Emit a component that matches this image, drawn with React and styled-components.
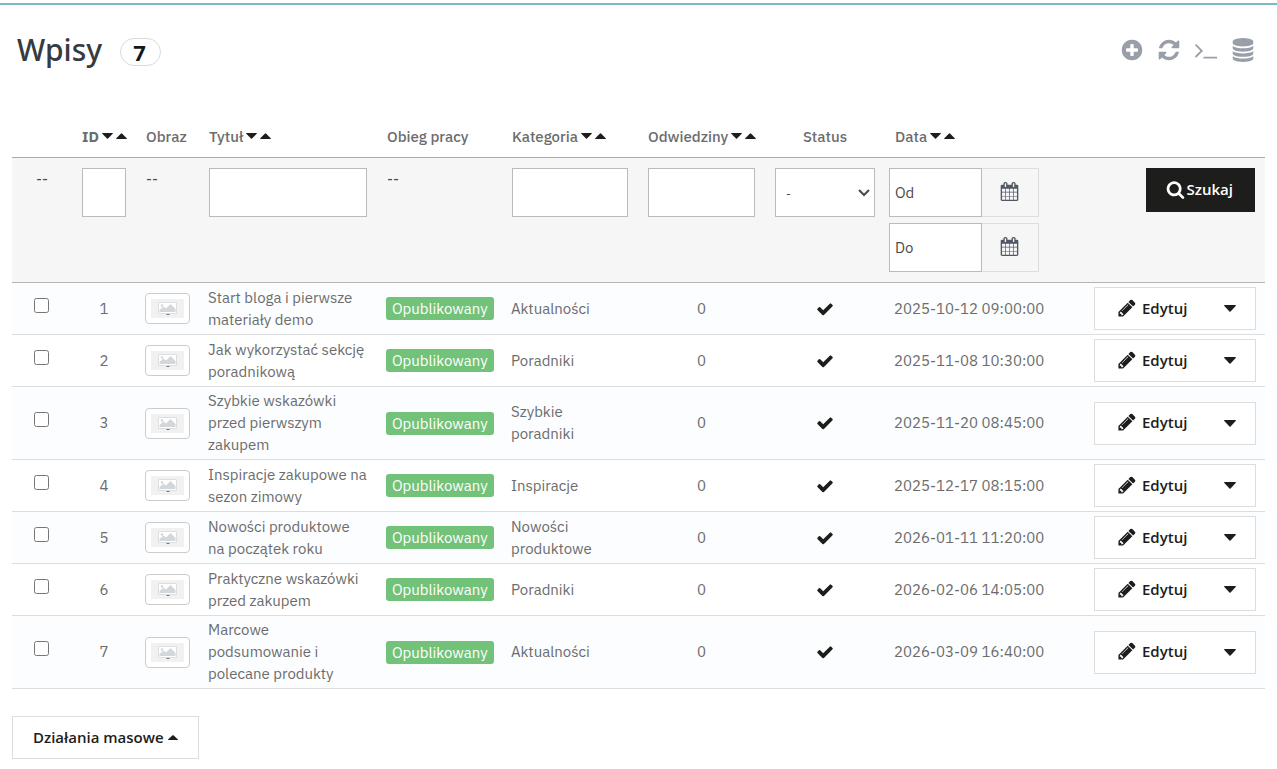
import React from 'react'
import styled, { createGlobalStyle } from 'styled-components';

const GlobalStyle = createGlobalStyle`
  * {
    box-sizing: border-box;
  }
  body {
    margin: 0;
    background-color: white;
    color: #6c6c6c;
    font-family: "IBM Plex Sans", Roboto, sans-serif;
    font-size: 15px;
    line-height: 22px;
  }
  button, input, select {
    font: inherit;
    border-radius: 0;
    margin: 0;
  }
`;

const Container = styled.main`
  margin-top: 3px;
  border-top: 2px solid #7db8c6;
`;
const Top = styled.header`
  display: flex;
  align-items: center;
  justify-content: space-between;
  padding: 24px 22px 0 17px;
  height: 66px;
`;
const Heading = styled.div`
  display: flex;
  align-items: center;
  gap: 18px;
`;
const Title = styled.h1`
  margin: 0;
  font-family: "Noto Sans", "Open Sans", sans-serif;
  font-weight: 500;
  font-size: 30px;
  line-height: 42px;
  color: #363a41;
`;
const Count = styled.span`
  width: 41px;
  height: 28px;
  margin-top: 3px;
  padding-right: 2px;
  border: 1px solid #dadada;
  border-radius: 14px;
  font-family: "Open Sans", sans-serif;
  font-weight: 700;
  font-size: 22px;
  line-height: 26px;
  text-align: center;
  color: #121821;
`;
const Tools = styled.nav`
  display: flex;
  gap: 13px;
`;
const Tool = styled.button`
  display: flex;
  padding: 0;
  border: none;
  background: none;
  color: #999fa9;
  cursor: pointer;
`;
const Wrapper = styled.form`
  padding: 45px 12px 10px;
`;
const Table = styled.table`
  width: 100%;
  table-layout: fixed;
  border-spacing: 0;
`;
const Col = styled.col`
  width: ${(props) => props.$w}px;
`;
const Th = styled.th`
  height: 42px;
  padding: 1px 0 0 ${(props) => (props.$center ? 0 : 10)}px;
  border-bottom: 1px solid #7fbacc;
  font-weight: 500;
  white-space: nowrap;
  text-align: ${(props) => (props.$center ? "center" : "left")};
`;
const HeadLabel = styled.span`
  display: inline-flex;
  align-items: center;
  gap: 3px;
  font-weight: ${(props) => (props.$strong ? 700 : 500)};
`;
const SortButton = styled.button`
  display: inline-flex;
  padding: 0 0 2px;
  border: none;
  background: none;
  color: #1d1d1b;
  cursor: pointer;
`;
const FilterCell = styled.td`
  height: 125px;
  padding: 10px 10px 10px ${(props) => (props.$date ? 4 : 10)}px;
  background-color: #f6f6f6;
  border-bottom: 1px solid #b5b5b5;
  vertical-align: top;
  color: #4a4a4a;
  text-align: ${(props) => props.$align || "left"};
`;
const Field = styled.input`
  display: block;
  width: 100%;
  height: 49px;
  padding: 0 5px;
  border: 1px solid #bbb;
  background-color: white;
  color: #4a4a4a;
  &::placeholder {
    color: #4a4a4a;
    opacity: 1;
  }
`;
const SelectBox = styled.div`
  display: grid;
  align-items: center;
  > * {
    grid-area: 1 / 1;
  }
  svg {
    justify-self: end;
    margin-right: 5px;
    pointer-events: none;
  }
`;
const Select = styled.select`
  width: 100%;
  height: 49px;
  padding: 2px 10px 0;
  border: 1px solid #bbb;
  background-color: white;
  color: #4a4a4a;
  font-size: 12px;
  appearance: none;
`;
const Dates = styled.div`
  display: flex;
  flex-direction: column;
  gap: 6px;
`;
const DateRow = styled.div`
  display: flex;
  width: 150px;
  ${Field} {
    width: 93px;
  }
`;
const Addon = styled.button`
  flex: 1;
  display: flex;
  align-items: center;
  justify-content: center;
  height: 49px;
  padding: 0 1px 2px 0;
  border: 1px solid #ddd;
  border-left: none;
  background-color: #f6f6f6;
  color: #515764;
`;
const SearchButton = styled.button`
  display: inline-flex;
  align-items: center;
  gap: 2px;
  height: 44px;
  padding: 0 22px 2px 20px;
  border: none;
  background-color: #1d1d1b;
  color: white;
  font-family: "Open Sans", sans-serif;
  font-weight: 600;
  cursor: pointer;
`;
const Row = styled.tr`
  background-color: white;
  &:nth-child(odd) {
    background-color: #fbfdff;
  }
`;
const Td = styled.td`
  padding: 3px 9px;
  border-bottom: 1px solid #ddd;
  text-align: ${(props) => (props.$center ? "center" : "left")};
`;
const Status = styled.span`
  display: flex;
  justify-content: center;
  color: #1d1d1b;
`;
const Check = styled.input`
  display: block;
  width: 15px;
  height: 15px;
  margin: 0 0 7px 13px;
`;
const Thumb = styled.div`
  display: flex;
  width: 45px;
  padding: 5px;
  border: 1px solid #ccc;
  border-radius: 4px;
  background-color: white;
`;
const Label = styled.span`
  display: block;
  width: fit-content;
  padding: 0 6px;
  border-radius: 3px;
  background-color: #72c279;
  color: white;
  line-height: 23px;
`;
const Group = styled.div`
  display: flex;
  height: 43px;
  margin: 1px 0 1px 1px;
  border: 1px solid #ddd;
  background-color: white;
`;
const Edit = styled.a`
  flex: 1;
  display: flex;
  align-items: center;
  gap: 5px;
  padding: 0 0 2px 22px;
  color: #1d1d1b;
  font-family: "Open Sans", sans-serif;
  font-weight: 600;
  text-decoration: none;
`;
const Toggle = styled.button`
  display: flex;
  align-items: center;
  padding: 0 19px;
  border: none;
  background: none;
  color: #1d1d1b;
  cursor: pointer;
`;
const Bulk = styled.button`
  display: flex;
  align-items: center;
  gap: 4px;
  height: 43px;
  margin-top: 27px;
  padding: 0 20px 1px;
  border: 1px solid #ddd;
  background-color: white;
  color: #1d1d1b;
  font-family: "Open Sans", sans-serif;
  font-weight: 600;
  cursor: pointer;
`;

const icons = {
  plus: "M1344 960v-128q0-26-19-45t-45-19h-256v-256q0-26-19-45t-45-19h-128q-26 0-45 19t-19 45v256h-256q-26 0-45 19t-19 45v128q0 26 19 45t45 19h256v256q0 26 19 45t45 19h128q26 0 45-19t19-45v-256h256q26 0 45-19t19-45zm320-64q0 209-103 385.5t-279.5 279.5-385.5 103-385.5-103-279.5-279.5-103-385.5 103-385.5 279.5-279.5 385.5-103 385.5 103 279.5 279.5 103 385.5z",
  refresh: "M1639 1056q0 5-1 7-64 268-268 434.5t-478 166.5q-146 0-282.5-55t-243.5-157l-129 129q-19 19-45 19t-45-19-19-45v-448q0-26 19-45t45-19h448q26 0 45 19t19 45-19 45l-137 137q71 66 161 102t187 36q134 0 250-65t186-179q11-17 53-117 8-23 30-23h192q13 0 22.5 9.5t9.5 22.5zm25-800v448q0 26-19 45t-45 19h-448q-26 0-45-19t-19-45 19-45l138-138q-148-137-349-137-134 0-250 65t-186 179q-11 17-53 117-8 23-30 23h-199q-13 0-22.5-9.5t-9.5-22.5v-7q65-268 270-434.5t480-166.5q146 0 284 55.5t245 156.5l130-129q19-19 45-19t45 19 19 45z",
  terminal: "M649 983l-466 466q-10 10-23 10t-23-10l-50-50q-10-10-10-23t10-23l393-393-393-393q-10-10-10-23t10-23l50-50q10-10 23-10t23 10l466 466q10 10 10 23t-10 23zm1079 457v64q0 14-9 23t-23 9h-960q-14 0-23-9t-9-23v-64q0-14 9-23t23-9h960q14 0 23 9t9 23z",
  database: "M896 768q237 0 443-43t325-127v170q0 69-103 128t-280 93.5-385 34.5-385-34.5-280-93.5-103-128v-170q119 84 325 127t443 43zm0 768q237 0 443-43t325-127v170q0 69-103 128t-280 93.5-385 34.5-385-34.5-280-93.5-103-128v-170q119 84 325 127t443 43zm0-384q237 0 443-43t325-127v170q0 69-103 128t-280 93.5-385 34.5-385-34.5-280-93.5-103-128v-170q119 84 325 127t443 43zm0-1152q208 0 385 34.5t280 93.5 103 128v128q0 69-103 128t-280 93.5-385 34.5-385-34.5-280-93.5-103-128v-128q0-69 103-128t280-93.5 385-34.5z",
  search: "M1216 832q0-185-131.5-316.5t-316.5-131.5-316.5 131.5-131.5 316.5 131.5 316.5 316.5 131.5 316.5-131.5 131.5-316.5zm512 832q0 52-38 90t-90 38q-54 0-90-38l-343-342q-179 124-399 124-143 0-273.5-55.5t-225-150-150-225-55.5-273.5 55.5-273.5 150-225 225-150 273.5-55.5 273.5 55.5 225 150 150 225 55.5 273.5q0 220-124 399l343 343q37 37 37 90z",
  check: "M1671 566q0 40-28 68l-724 724-136 136q-28 28-68 28t-68-28l-136-136-362-362q-28-28-28-68t28-68l136-136q28-28 68-28t68 28l294 295 656-657q28-28 68-28t68 28l136 136q28 28 28 68z",
  pencil: "M491 1536l91-91-235-235-91 91v107h128v128h107zm523-928q0-22-22-22-10 0-17 7l-542 542q-7 7-7 17 0 22 22 22 10 0 17-7l542-542q7-7 7-17zm-54-192l416 416-832 832h-416v-416zm683 96q0 53-37 90l-166 166-416-416 166-165q36-38 90-38 53 0 91 38l235 234q37 39 37 91z",
  calendar: "M192 1664h288v-288h-288v288zm352 0h320v-288h-320v288zm-352-352h288v-320h-288v320zm352 0h320v-320h-320v320zm-352-384h288v-288h-288v288zm736 736h320v-288h-320v288zm-384-736h320v-288h-320v288zm768 736h288v-288h-288v288zm-384-352h320v-320h-320v320zm-352-864v-288q0-13-9.5-22.5t-22.5-9.5h-64q-13 0-22.5 9.5t-9.5 22.5v288q0 13 9.5 22.5t22.5 9.5h64q13 0 22.5-9.5t9.5-22.5zm736 864h288v-320h-288v320zm-384-384h320v-288h-320v288zm384 0h288v-288h-288v288zm32-480v-288q0-13-9.5-22.5t-22.5-9.5h-64q-13 0-22.5 9.5t-9.5 22.5v288q0 13 9.5 22.5t22.5 9.5h64q13 0 22.5-9.5t9.5-22.5zm384-64v1280q0 52-38 90t-90 38h-1408q-52 0-90-38t-38-90v-1280q0-52 38-90t90-38h128v-96q0-66 47-113t113-47h64q66 0 113 47t47 113v96h384v-96q0-66 47-113t113-47h64q66 0 113 47t47 113v96h128q52 0 90 38t38 90z",
};

const Icon = ({ name, size }) => (
  <svg width={size} height={size} viewBox="0 0 1792 1792" fill="currentColor" aria-hidden="true">
    <path d={icons[name]} />
  </svg>
);

const Caret = ({ up, width = 11, height = 6 }) => (
  <svg width={width} height={height} viewBox="0 0 11 6" preserveAspectRatio="none" fill="currentColor" aria-hidden="true">
    <path d={up ? "M.7 6Q-.3 6 .3 5.2L5 .4Q5.500 0 6 .4L10.700 5.200Q11.300 6 10.300 6z" : "M.7 0Q-.3 0 .3.8L5 5.600Q5.500 6 6 5.600L10.700.8Q11.300 0 10.300 0z"} />
  </svg>
);

const Placeholder = () => (
  <svg width="33" height="19" viewBox="0 0 33 19" aria-hidden="true">
    <path fill="#f1f1f1" d="M0 0h33v19H0z" />
    <path fill="#fff" stroke="#dcdfe1" d="M7.500 3.500h18v11h-18z" />
    <path fill="#d3d7da" d="M8.500 13V11l4-3.500 2.500 2 4.500-4.500 5 5V13z" />
    <circle cx="11" cy="6.500" r="1.300" fill="#d3d7da" />
    <path fill="#757575" d="M15 15h4l-1 1h-2z" />
  </svg>
);

const Heads = ({ label, sort, strong }) => (
  <HeadLabel $strong={strong}>
    {label}
    {sort && (
      <>
        <SortButton type="button" aria-label={label + " malejąco"}><Caret /></SortButton>
        <SortButton type="button" aria-label={label + " rosnąco"}><Caret up /></SortButton>
      </>
    )}
  </HeadLabel>
);

const posts = [
  { id: 1, title: "Start bloga i pierwsze materiały demo", category: "Aktualności", date: "2025-10-12 09:00:00" },
  { id: 2, title: "Jak wykorzystać sekcję poradnikową", category: "Poradniki", date: "2025-11-08 10:30:00" },
  { id: 3, title: "Szybkie wskazówki przed pierwszym zakupem", category: "Szybkie poradniki", date: "2025-11-20 08:45:00" },
  { id: 4, title: "Inspiracje zakupowe na sezon zimowy", category: "Inspiracje", date: "2025-12-17 08:15:00" },
  { id: 5, title: "Nowości produktowe na początek roku", category: "Nowości produktowe", date: "2026-01-11 11:20:00" },
  { id: 6, title: "Praktyczne wskazówki przed zakupem", category: "Poradniki", date: "2026-02-06 14:05:00" },
  { id: 7, title: "Marcowe podsumowanie i polecane produkty", category: "Aktualności", date: "2026-03-09 16:40:00" },
];

const App = () => {
  return (
    <Container>
      <GlobalStyle />
      <Top>
        <Heading>
          <Title>Wpisy</Title>
          <Count>7</Count>
        </Heading>
        <Tools>
          <Tool aria-label="Dodaj"><Icon name="plus" size={24} /></Tool>
          <Tool aria-label="Odśwież"><Icon name="refresh" size={24} /></Tool>
          <Tool aria-label="Pokaż zapytanie SQL"><Icon name="terminal" size={24} /></Tool>
          <Tool aria-label="Eksportuj do SQL"><Icon name="database" size={24} /></Tool>
        </Tools>
      </Top>
      <Wrapper onSubmit={(e) => e.preventDefault()}>
        <Table>
          <colgroup>
            <Col $w={60} />
            <Col $w={64} />
            <Col $w={63} />
            <col />
            <Col $w={125} />
            <Col $w={136} />
            <Col $w={127} />
            <Col $w={120} />
            <Col $w={199} />
            <Col $w={181} />
          </colgroup>
          <thead>
            <tr>
              <Th />
              <Th><Heads label="ID" sort strong /></Th>
              <Th>Obraz</Th>
              <Th><Heads label="Tytuł" sort /></Th>
              <Th>Obieg pracy</Th>
              <Th><Heads label="Kategoria" sort /></Th>
              <Th><Heads label="Odwiedziny" sort /></Th>
              <Th $center>Status</Th>
              <Th><Heads label="Data" sort /></Th>
              <Th />
            </tr>
            <tr>
              <FilterCell $align="center">--</FilterCell>
              <FilterCell><Field aria-label="ID" /></FilterCell>
              <FilterCell>--</FilterCell>
              <FilterCell><Field aria-label="Tytuł" /></FilterCell>
              <FilterCell>--</FilterCell>
              <FilterCell><Field aria-label="Kategoria" /></FilterCell>
              <FilterCell><Field aria-label="Odwiedziny" /></FilterCell>
              <FilterCell>
                <SelectBox>
                  <Select aria-label="Status">
                    <option>-</option>
                  </Select>
                  <svg width="12" height="8" viewBox="0 0 12 8" fill="none" stroke="#4a4a4a" strokeWidth="2" aria-hidden="true">
                    <path d="M1 1l5 5 5-5" />
                  </svg>
                </SelectBox>
              </FilterCell>
              <FilterCell $date>
                <Dates>
                  <DateRow>
                    <Field placeholder="Od" aria-label="Od" />
                    <Addon type="button" aria-label="Wybierz datę od"><Icon name="calendar" size={19} /></Addon>
                  </DateRow>
                  <DateRow>
                    <Field placeholder="Do" aria-label="Do" />
                    <Addon type="button" aria-label="Wybierz datę do"><Icon name="calendar" size={19} /></Addon>
                  </DateRow>
                </Dates>
              </FilterCell>
              <FilterCell $align="right">
                <SearchButton><Icon name="search" size={19} />Szukaj</SearchButton>
              </FilterCell>
            </tr>
          </thead>
          <tbody>
            {posts.map((post) => (
              <Row key={post.id}>
                <Td><Check type="checkbox" aria-label={"Zaznacz wpis " + post.id} /></Td>
                <Td $center>{post.id}</Td>
                <Td><Thumb><Placeholder /></Thumb></Td>
                <Td>{post.title}</Td>
                <Td><Label>Opublikowany</Label></Td>
                <Td>{post.category}</Td>
                <Td $center>0</Td>
                <Td><Status><Icon name="check" size={18} /></Status></Td>
                <Td>{post.date}</Td>
                <Td>
                  <Group>
                    <Edit href="#"><Icon name="pencil" size={20} />Edytuj</Edit>
                    <Toggle type="button" aria-label="Więcej"><Caret width={12} height={7} /></Toggle>
                  </Group>
                </Td>
              </Row>
            ))}
          </tbody>
        </Table>
        <Bulk type="button">Działania masowe <Caret up width={10} height={5} /></Bulk>
      </Wrapper>
    </Container>
  );
}

export default App
